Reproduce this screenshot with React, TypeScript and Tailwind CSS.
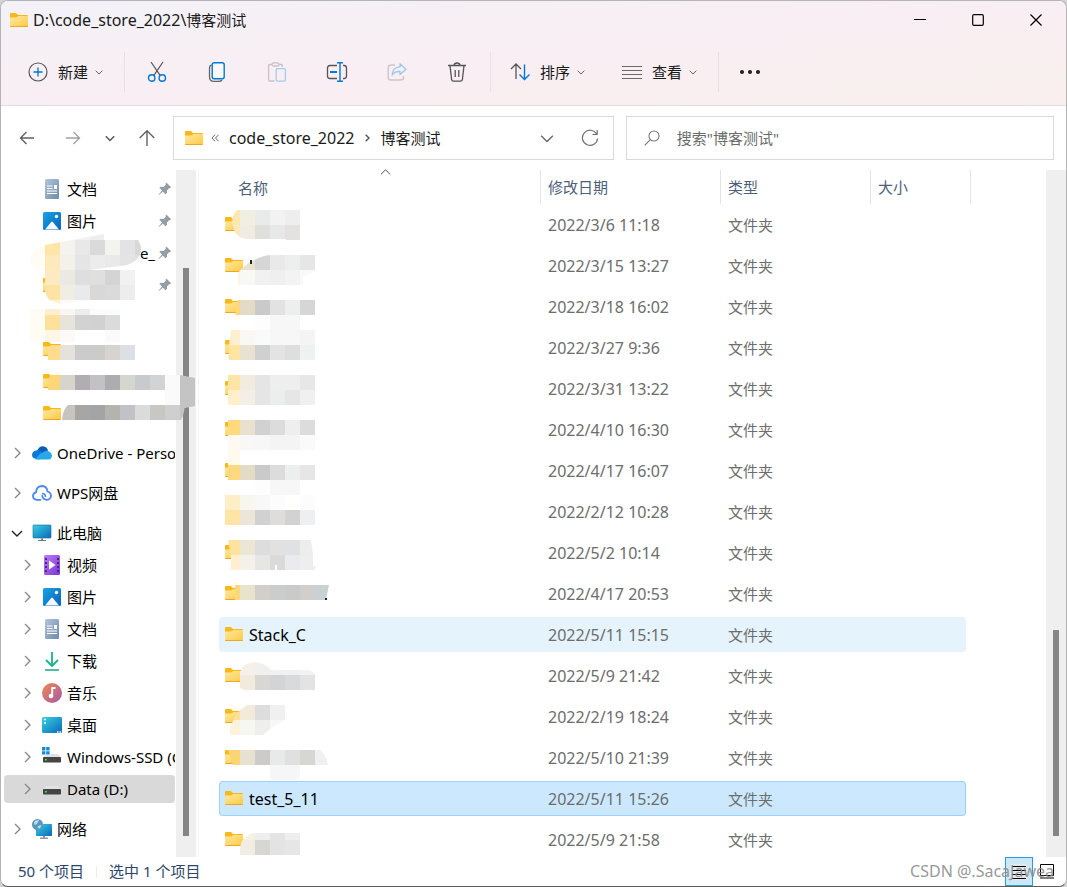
import { useId, type ReactNode } from "react";

/* ---------- icons ---------- */

function FolderIcon() {
  const id = useId();
  return (
    <svg width="18" height="14" viewBox="0 0 18 14" className="shrink-0" aria-hidden="true">
      <defs>
        <linearGradient id={id} x1="0" y1="0" x2="1" y2="1">
          <stop offset="0" stopColor="#ffe9a6" />
          <stop offset="1" stopColor="#fec93d" />
        </linearGradient>
      </defs>
      <path d="M0 1Q0 0 1 0H6L8 2H17Q18 2 18 3V6H0Z" fill="#f9b817" />
      <path d="M0 4.5H6L8.5 3H18V13Q18 14 17 14H1Q0 14 0 13Z" fill={`url(#${id})`} />
      <path d="M0 13H18Q18 14 17 14H1Q0 14 0 13Z" fill="#eda81f" />
    </svg>
  );
}

function Chevron({ dir, size = 8, color = "#666", width = 1 }: { dir: "up" | "down" | "right"; size?: number; color?: string; width?: number }) {
  const d = dir === "down" ? "M1 4L6 9L11 4" : dir === "up" ? "M1 8L6 3L11 8" : "M4 1L9 6L4 11";
  return (
    <svg width={size} height={size} viewBox="0 0 12 12" className="shrink-0" fill="none" stroke={color} strokeWidth={(width * 12) / size} aria-hidden="true">
      <path d={d} />
    </svg>
  );
}

function Svg({ w = 20, h = 20, children }: { w?: number; h?: number; children: ReactNode }) {
  return (
    <svg width={w} height={h} viewBox={`0 0 ${w} ${h}`} className="shrink-0" fill="none" aria-hidden="true">
      {children}
    </svg>
  );
}

const NewIcon = () => (
  <Svg>
    <circle cx="10" cy="10" r="9" stroke="#555" strokeWidth="1.2" />
    <path d="M10 5.5V14.5M5.5 10H14.5" stroke="#0078d4" strokeWidth="1.3" />
  </Svg>
);
const CutIcon = () => (
  <Svg h={22}>
    <path d="M4 1L13.3 14.6M16 1L6.7 14.6" stroke="#555" strokeWidth="1.2" />
    <circle cx="4.7" cy="17" r="3.2" stroke="#0078d4" strokeWidth="1.4" />
    <circle cx="15.3" cy="17" r="3.2" stroke="#0078d4" strokeWidth="1.4" />
  </Svg>
);
const CopyIcon = () => (
  <Svg>
    <path d="M4.5 3Q2.5 3.5 2.5 6V15Q2.5 19.3 7 19.3H12Q14 19.3 15 18" stroke="#666" strokeWidth="1.3" />
    <rect x="5.2" y="0.7" width="12" height="16" rx="2" fill="#f9f9fd" stroke="#0078d4" strokeWidth="1.4" />
  </Svg>
);
const PasteIcon = () => (
  <Svg>
    <path d="M7.5 19H2.8Q1.6 19 1.6 17.8V3.7Q1.6 2.5 2.8 2.5H5M12 2.5H14.2Q15.4 2.5 15.4 3.7V5" stroke="#c7c3c8" strokeWidth="1.3" />
    <rect x="5" y="0.8" width="7" height="3.2" rx="1.6" stroke="#c7c3c8" strokeWidth="1.3" />
    <rect x="9.2" y="6.6" width="9.2" height="12.6" rx="1.5" stroke="#a5cbee" strokeWidth="1.3" />
  </Svg>
);
const RenameIcon = () => (
  <Svg w={22}>
    <path d="M11 3.5H4Q1.5 3.5 1.5 6V14Q1.5 16.5 4 16.5H11M17 3.5H18Q20.5 3.5 20.5 6V14Q20.5 16.5 18 16.5H17" stroke="#555" strokeWidth="1.3" />
    <path d="M4 10H11" stroke="#0078d4" strokeWidth="1.8" />
    <path d="M14 0.7V19.3M11 0.7H17M11 19.3H17" stroke="#0078d4" strokeWidth="1.4" />
  </Svg>
);
const ShareIcon = () => (
  <Svg>
    <path d="M8 3H4Q1.2 3 1.2 5.8V15.2Q1.2 18 4 18H13.5Q16.5 18 16.5 15.2V14" stroke="#cbc6c9" strokeWidth="1.4" />
    <path d="M13 1.8L19 7.2L13 12.5V9.5Q7.5 9.2 5 13.2Q5.5 5.3 13 4.9Z" stroke="#9cc8ee" strokeWidth="1.3" strokeLinejoin="round" />
  </Svg>
);
const DeleteIcon = () => (
  <Svg>
    <path d="M1 3.5H19M7 3.3Q7.3 1 10 1T13 3.3M3 3.7L4.6 17.4Q4.8 19.2 6.5 19.2H13.5Q15.2 19.2 15.4 17.4L17 3.7M8.2 8V15M11.8 8V15" stroke="#555" strokeWidth="1.3" />
  </Svg>
);
const SortIcon = () => (
  <Svg>
    <path d="M6 17V2M1 7L6 2L11 7" stroke="#555" strokeWidth="1.3" />
    <path d="M14.5 2.5V17.5M9.5 12.5L14.5 17.5L19.5 12.5" stroke="#0078d4" strokeWidth="1.4" />
  </Svg>
);
const ListIcon = () => (
  <Svg>
    <path d="M0 4.5H20M0 8.5H20M0 12.5H20M0 16.5H20" stroke="#6b686a" strokeWidth="1" />
  </Svg>
);
const PinIcon = () => (
  <Svg w={14} h={14}>
    <path d="M8.5 0.7L13.2 5.3L12 6.2L11.2 6L9 8.4L9 11L7.6 12.2L4.8 9.5L1 13L0.5 12.7L4 8.6L1.3 5.8L2.7 4.7L5.4 4.9L7.8 2.7L7.5 1.8Z" fill="#929da5" />
  </Svg>
);

function DocIcon() {
  return (
    <Svg w={20}>
      <defs>
        <linearGradient id="doc-face" x1="0" y1="0" x2="1" y2="1">
          <stop stopColor="#b3c5d8" />
          <stop offset="1" stopColor="#6d8bab" />
        </linearGradient>
      </defs>
      <rect x="3" width="14" height="20" rx="1.5" fill="url(#doc-face)" />
      <path d="M5 7H10.5M5 9.5H10.5M5 12H15M5 14.5H15" stroke="#fff" strokeWidth="1.2" />
      <rect x="12" y="6" width="3" height="4" fill="#fff" />
    </Svg>
  );
}
function PictureIcon() {
  return (
    <Svg>
      <defs>
        <linearGradient id="pic-face" x1="0" y1="0" x2="1" y2="1">
          <stop stopColor="#17a3e6" />
          <stop offset="1" stopColor="#0a62bb" />
        </linearGradient>
      </defs>
      <rect x="1" y="1" width="18" height="18" rx="1.5" fill="url(#pic-face)" />
      <path d="M3 18.5L9.2 11Q10 10.2 10.8 11L17 18.5Z" fill="#f3f8fd" />
      <circle cx="14.5" cy="5.5" r="1.7" fill="#fff" />
    </Svg>
  );
}
function CloudIcon() {
  return (
    <Svg w={20}>
      <path d="M5 8Q7 3 11 3.2Q15 3.6 16 7.5L11 11Z" fill="#0a5cb8" />
      <path d="M4.5 16Q0 15.5 0 11.8Q0.3 8.3 4 7.5Q7.5 6.5 10 8.8L14.5 12L7 16.5Z" fill="#0d79d6" />
      <path d="M3.5 16.5Q6 11.5 10.5 9.8Q14 6.5 17 8.5Q19.8 9.5 20 12.6Q19.8 16.5 16.2 16.6H5Z" fill="#28a8ea" />
    </Svg>
  );
}
function WpsIcon() {
  return (
    <Svg w={20}>
      <path d="M8.5 16.8H4.5Q1 16.2 1 13Q1 10 4 9.3Q4.6 3 10.2 3Q15 3.2 15.5 8.5Q19 9.5 19 13Q18.6 16.6 15 16.8Q10.5 16.5 10.3 12.8" stroke="#4a87f2" strokeWidth="1.8" strokeLinecap="round" />
      <path d="M10 10.5Q13.5 10.4 13.5 14" stroke="#4a87f2" strokeWidth="1.6" />
    </Svg>
  );
}
const TealFace = ({ id }: { id: string }) => (
  <defs>
    <linearGradient id={id} x1="0" y1="0" x2="1" y2="1">
      <stop stopColor="#36d3e2" />
      <stop offset="1" stopColor="#0b67b9" />
    </linearGradient>
  </defs>
);
function PcIcon() {
  return (
    <Svg w={20}>
      <TealFace id="pc-face" />
      <rect x="1" y="2" width="18" height="13" rx="0.7" fill="url(#pc-face)" stroke="#126b94" strokeWidth="0.6" />
      <path d="M9 15.5H11V17H14V18H6V17H9Z" fill="#687887" />
    </Svg>
  );
}
function VideoIcon() {
  return (
    <Svg>
      <defs>
        <linearGradient id="vid-face" x1="0" y1="0" x2="1" y2="1">
          <stop stopColor="#b97cf4" />
          <stop offset="1" stopColor="#7c35d6" />
        </linearGradient>
      </defs>
      <rect x="2" width="16" height="20" rx="1.5" fill="url(#vid-face)" />
      <path d="M4 3V18M16 3V18" stroke="#43216f" strokeWidth="1.8" strokeDasharray="2 2" />
      <path d="M7 5.5V14.5L13.5 10Z" fill="#fff" />
    </Svg>
  );
}
function DownloadIcon() {
  return (
    <Svg>
      <path d="M10 1V14.5M4 9L10 15L16 9" stroke="#17b38c" strokeWidth="1.8" />
      <path d="M3 19H17" stroke="#17a78a" strokeWidth="1.7" />
    </Svg>
  );
}
function MusicIcon() {
  return (
    <Svg>
      <defs>
        <linearGradient id="music-face" x1="0" y1="0" x2="1" y2="1">
          <stop stopColor="#f08a4d" />
          <stop offset="1" stopColor="#a557a8" />
        </linearGradient>
      </defs>
      <circle cx="10" cy="10" r="10" fill="url(#music-face)" />
      <circle cx="9" cy="13" r="2.3" fill="#fff" />
      <path d="M10.2 13V5H13.5" stroke="#fff" strokeWidth="1.9" />
    </Svg>
  );
}
function DesktopIcon() {
  return (
    <Svg>
      <TealFace id="desk-face" />
      <rect y="2" width="20" height="16" rx="1.2" fill="url(#desk-face)" />
      <path d="M2 4.5H4M2 8H4M15 17H16.5M17.5 17H19" stroke="#fff" strokeWidth="1.7" />
    </Svg>
  );
}
function DriveIcon({ system = false }: { system?: boolean }) {
  return (
    <Svg>
      <path d="M4 7H16L19 10.5H1Z" fill="#e0e2e5" />
      <rect x="1" y="10" width="18" height="5.5" rx="0.8" fill="#454545" />
      <rect x="3" y="12" width="2" height="1.5" fill="#45d74b" />
      {system && (
        <>
          <rect width="8" height="8" fill="#fff" />
          <path d="M0 0H3.4V3.4H0ZM4.2 0H7.6V3.4H4.2ZM0 4.2H3.4V7.6H0ZM4.2 4.2H7.6V7.6H4.2Z" fill="#148bd8" />
        </>
      )}
    </Svg>
  );
}
function NetworkIcon() {
  return (
    <Svg w={20}>
      <TealFace id="net-face" />
      <rect x="4" y="5" width="16" height="12" rx="0.8" fill="url(#net-face)" />
      <path d="M11 17H13V18.5H16V20H8V18.5H11Z" fill="#8b9aa7" />
      <circle cx="5.5" cy="5.5" r="5.5" fill="#5b97ba" />
      <path d="M2 3Q4 0.5 7 1L5 5L2.5 6ZM6 7L9.5 6L8 9.5L5.5 9Z" fill="#b9dcec" />
    </Svg>
  );
}

/* ---------- mosaic over hidden names: strips of 15px tiles ---------- */

type Strip = [x: number, y: number, colors: string];
type Cover = { strips: Strip[]; clip?: string; mark?: [number, number, number, number] };

function Mosaic({ cover }: { cover: Cover }) {
  const id = useId();
  return (
    <svg width="1" height="1" className="pointer-events-none absolute left-0 top-0 z-10 overflow-visible" aria-hidden="true">
      {cover.clip && (
        <clipPath id={id}>
          <path d={cover.clip} />
        </clipPath>
      )}
      <g clipPath={cover.clip ? `url(#${id})` : undefined} shapeRendering="crispEdges">
        {cover.strips.map(([x, y, colors]) =>
          colors.split(" ").map((c, i) => (c === "-" ? null : <rect key={`${x}-${y}-${i}`} x={x + i * 15} y={y} width="15" height="15" fill={`#${c}`} />)),
        )}
      </g>
      {cover.mark && <rect x={cover.mark[0]} y={cover.mark[1]} width={cover.mark[2]} height={cover.mark[3]} fill="#14283c" />}
    </svg>
  );
}

/* ---------- data ---------- */

type FileRow = { name?: string; date: string; state?: "hover" | "selected"; cover?: Cover };

const files: FileRow[] = [
  { date: "2022/3/6 11:18", cover: { clip: "M18 3L14 9L13 16L16 26L22 31L28 32H67V33H81V3Z", strips: [[6, 3, "fde6b0 f1eee2 e8ebe9 f2f2f2 eeeeee"], [6, 18, "fbe9bf f0ece1 dfdfdc e6e9e8 e4e1e1"]] } },
  { date: "2022/3/15 13:27", cover: { clip: "M19 36V25Q25 17 35 12Q45 7 53 7H96V23L84 29V37H19Z", mark: [31, 12, 2, 4], strips: [[6, 7, "fde6b0 e8e2cf d6d6d6 e9e9e9 ecefee e6e6e6"], [6, 22, "fdf5e3 f8f8f4 f1f1f1 efefef f3f3f3 f9f9f9"]] } },
  { date: "2022/3/18 16:02", cover: { clip: "M19 11H96V41H36V26H16Z", strips: [[6, 11, "fdd77d e4dbc6 c9cac9 e2e2e2 ecefed d6d6d6"], [36, 26, "fdfdfd f7f7f7 f7f7f7"]] } },
  { date: "2022/3/27 9:36", cover: { clip: "M12 0H96V30H10V15Z", strips: [[6, 0, "fdefd0 f9f8f2 fafafa f7f7f7 f7f7f7 f4f4f4"], [6, 15, "fee5a2 e9e2d2 cfd1d0 e3e3e3 dedede eef2f1"]] } },
  { date: "2022/3/31 13:22", cover: { clip: "M9 4H96V34H9Z", strips: [[6, 4, "fee5a5 f1ecdf e5e5e5 eeeeee eeeeee e7e7e7"], [6, 19, "ffefcb f3efe6 e5e5e5 eaeeec e6e6e6 eef1ef"]] } },
  { date: "2022/4/10 16:30", cover: { clip: "M9 8H96V53H9Z", strips: [[6, 8, "fed97e e9e1cd d1d1d1 dcdcdc eeeeee dcdcdc"], [6, 23, "fff9f2 faf8f7 f7f7f7 f4f4f4 f4f4f4 fafafa"], [6, 38, "fff9ee"]] } },
  { date: "2022/4/17 16:07", cover: { clip: "M9 12H96V42H9Z", strips: [[6, 12, "fed97e e4dbc6 c9cac9 dcdcdc ebefed e6e6e6"], [36, 27, "fdfdfd f7f7f7 f7f7f7"]] } },
  { date: "2022/2/12 10:28", cover: { strips: [[6, 1, "feeec8 f7f6ef f8f8f8 fcfcfc fffffc fcfcfc"], [6, 16, "fee5a5 ece5d8 d1d1d1 dedddc d2d2d2 eeeff1"]] } },
  { date: "2022/5/2 10:14", cover: { clip: "M9 5H92L94 19V31H96V35H58V30H56V35H12V22Z", strips: [[6, 5, "fee3a0 ece6d6 dddddd e2e1df dfe1e3 eceeed"], [6, 20, "ffefd0 f5f0e8 e6e6e4 dbdad9 e9ebee eeeeee"]] } },
  { date: "2022/4/17 20:53", cover: { clip: "M16 9H110L107 24H16Z", mark: [106, 22, 2, 2], strips: [[6, 9, "fdd77d e9e3cc d2ceca cbcdcc c9cbcb d1cfcb cbd1d3"]] } },
  { name: "Stack_C", date: "2022/5/11 15:15", state: "hover" },
  { date: "2022/5/9 21:42", cover: { clip: "M21 30V14Q25 4 36 4Q46 5 52 12H89Q95 13 96 17V32H25Z", strips: [[21, 2, "f5f1ea f0f0ef f1f1f1 f0f0f2 f2f2f2"], [21, 17, "f2eadd d9d7d3 d3d4d6 d9dadc e3e3e3"]] } },
  { date: "2022/2/19 18:24", cover: { clip: "M11 36V29L16 17L21 11L28 6H66V21L51 30L44 36Z", strips: [[6, 6, "fde09a f2ebda dddddd f0f0f0"], [6, 21, "fff2dc f6f7f1 eeefed f6f8f8"]] } },
  { date: "2022/5/10 21:39", cover: { clip: "M9 10H101Q107 14 109 25H81V38L76 40H53L51 38V25H14Z", strips: [[6, 10, "fcd573 e9e1cf cdcaca e7eae8 e0e0e0 d6d7d2 f0f0f2"], [51, 25, "f6f6f6 f6f6f6"]] } },
  { name: "test_5_11", date: "2022/5/11 15:26", state: "selected" },
  { date: "2022/5/9 21:58", cover: { clip: "M21 33V26Q22 15 34 11H81V33Z", strips: [[21, 3, "f5f1e6 eeeeee e4e4e4 eeeeee"], [21, 18, "f2ede3 d8d6d3 e3e3e3 e6e6e6"]] } },
];

type Pinned = { label?: string; icon?: ReactNode; tail?: string; pinned?: boolean; cover?: Cover };

const pinned: Pinned[] = [
  { label: "文档", icon: <DocIcon />, pinned: true },
  { label: "图片", icon: <PictureIcon />, pinned: true },
  {
    tail: "e_",
    pinned: true,
    cover: {
      clip: "M29 20Q33 10 44 8L103 -3V3H137Q143 12 137 21Q131 28 119 29L88 33H44Q29 34 29 20Z",
      strips: [[29, -12, "fffcf3 fdf3d8 fafafa f2f2f2 eeeeee"], [29, 3, "fffcf3 fde6a8 f5f3ee e8e8e8 dadada f3f4ee e3e3e5 d8d8d8"], [29, 18, "fffcf3 fdeabc f4f1ea e5e5e5 ececec e9e9ea e4e4e5 e0e0e0"]],
    },
  },
  {
    pinned: true,
    cover: {
      clip: "M44 1H134V31H90L60 35Q44 33 44 20Z",
      strips: [[44, 1, "fcebc0 ece8e4 dedede dfe0dd d4d4d4 eff2f1"], [44, 16, "fee3a5 f0ede3 e8eaeb d8d8d8 dadadb ededed"], [44, 31, "fdf3d8 fafafa fafafa"]],
    },
  },
  {
    cover: {
      clip: "M29 8H119V41H29Z",
      strips: [[29, -1, "fffcf3 fdefcf faf7f2 ededed fafcfb fafcfb"], [29, 14, "fffcf3 fee29c e7e4dc d1d3d2 d1d1d1 dbdbd9"], [29, 29, "fffcf3 fff7e6 fcfaf6 ffffff ffffff fbf9f9"]],
    },
  },
  { cover: { clip: "M51 12H134V27H47V17Z", strips: [[44, 12, "fedc8c e5e2db cbcbcb cbcbc9 d7d3cf dcdfe5"]] } },
  {
    cover: {
      clip: "M50 10H179L194 13V41L184 43H179V46H164V25H47V14Z",
      strips: [[44, 10, "fed67a d7d4cb b0aeb0 c3c1c3 abadae d6d6d1 c7cbce d1d3d4 fafafa c4c4c4"], [164, 25, "fafafa c4c4c4"], [164, 40, "fafafa c4c4c4"]],
    },
  },
  { cover: { clip: "M67 8H184Q183 18 180 23H61Q62 12 67 8Z", strips: [[59, 8, "c7c3bf a7a6a5 a5a4a5 b4b3b0 c0c2c7 dbdbdb c8c7c4 cfcfcf c4c4c4"]] } },
];

const computer: { label: string; icon: ReactNode; active?: boolean }[] = [
  { label: "视频", icon: <VideoIcon /> },
  { label: "图片", icon: <PictureIcon /> },
  { label: "文档", icon: <DocIcon /> },
  { label: "下载", icon: <DownloadIcon /> },
  { label: "音乐", icon: <MusicIcon /> },
  { label: "桌面", icon: <DesktopIcon /> },
  { label: "Windows-SSD (C:)", icon: <DriveIcon system /> },
  { label: "Data (D:)", icon: <DriveIcon />, active: true },
];

/* ---------- pieces ---------- */

function TitleBar() {
  return (
    <div className="flex h-[37px] items-center pl-[9px] pr-px">
      <FolderIcon />
      <h1 className="ml-[5px] flex-1 text-base leading-5 text-[#1a1a1a]">
        D:\code_store_2022\<span className="text-[15px]">博客测试</span>
      </h1>
      {[
        ["最小化", "M0 5.5H12"],
        ["最大化", "M2 0.7H10Q11.3 0.7 11.3 2V10Q11.3 11.3 10 11.3H2Q0.7 11.3 0.7 10V2Q0.7 0.7 2 0.7Z"],
        ["关闭", "M0.5 0.5L11.5 11.5M11.5 0.5L0.5 11.5"],
      ].map(([label, d]) => (
        <button key={label} type="button" aria-label={label} className="flex h-9 w-[58px] items-center justify-center">
          <svg width="12" height="12" viewBox="0 0 12 12" fill="none" stroke="#000" strokeWidth="1.2">
            <path d={d} />
          </svg>
        </button>
      ))}
    </div>
  );
}

const Divider = () => <span className="h-10 w-px bg-[#e8e0e6]" />;

function Toolbar() {
  const tools: [string, ReactNode][] = [
    ["剪切", <CutIcon />],
    ["复制", <CopyIcon />],
    ["粘贴", <PasteIcon />],
    ["重命名", <RenameIcon />],
    ["共享", <ShareIcon />],
    ["删除", <DeleteIcon />],
  ];
  return (
    <div role="toolbar" className="flex items-center pb-[13px] pt-[14px] text-[15px] leading-5 text-[#1a1a1a]">
      <button type="button" className="flex h-10 items-center pl-[27px] pr-[21px]">
        <NewIcon />
        <span className="ml-[10px] mr-[7px]">新建</span>
        <Chevron dir="down" />
      </button>
      <Divider />
      <div className="ml-[2px] mr-[3px] flex">
        {tools.map(([label, icon]) => (
          <button key={label} type="button" aria-label={label} className="flex h-10 w-[60px] items-center justify-center">
            {icon}
          </button>
        ))}
      </div>
      <Divider />
      <button type="button" className="flex h-10 items-center px-[19px]">
        <SortIcon />
        <span className="ml-[10px] mr-[7px]">排序</span>
        <Chevron dir="down" />
      </button>
      <button type="button" className="flex h-10 items-center pl-[18px] pr-[21px]">
        <ListIcon />
        <span className="ml-[10px] mr-[7px]">查看</span>
        <Chevron dir="down" />
      </button>
      <Divider />
      <button type="button" aria-label="更多" className="flex h-10 w-[62px] items-center justify-center">
        <Svg h={4}>
          <circle cx="2" cy="2" r="2" fill="#1a1a1a" />
          <circle cx="10" cy="2" r="2" fill="#1a1a1a" />
          <circle cx="18" cy="2" r="2" fill="#1a1a1a" />
        </Svg>
      </button>
    </div>
  );
}

function NavArrow({ label, d, color }: { label: string; d: string; color: string }) {
  return (
    <button type="button" aria-label={label} className="flex h-8 w-8 items-center justify-center">
      <svg width="16" height="16" viewBox="0 0 16 16" fill="none" stroke={color} strokeWidth="1.4">
        <path d={d} />
      </svg>
    </button>
  );
}

function AddressRow() {
  return (
    <div className="flex h-16 items-center pl-[10px] pr-3">
      <div className="flex w-[162px] items-center">
        <NavArrow label="后退" color="#606060" d="M15 8H1.5M7.5 2L1.5 8L7.5 14" />
        <span className="w-[14px]" />
        <NavArrow label="前进" color="#a2a2a2" d="M1 8H14.5M8.5 2L14.5 8L8.5 14" />
        <button type="button" aria-label="最近浏览的位置" className="ml-[13px] mr-[13px] flex h-8 w-4 items-center justify-center">
          <Chevron dir="down" size={10} color="#555" width={1.4} />
        </button>
        <NavArrow label="上移" color="#606060" d="M8 16V1M0.7 8L8 0.8L15.3 8" />
      </div>
      <div className="flex h-11 flex-[51] items-center border border-[#d9d9d9] pl-[11px] pr-[2px] text-[15px] leading-5 text-[#1a1a1a]">
        <FolderIcon />
        <span className="ml-2">
          <Svg w={8} h={8}>
            <path d="M4 0.8L1 4L4 7.2M7.5 0.8L4.5 4L7.5 7.2" stroke="#666" />
          </Svg>
        </span>
        <a href="#code_store_2022" className="ml-[10px] text-base leading-5">
          code_store_2022
        </a>
        <span className="mx-[9px]">
          <Chevron dir="right" size={8} color="#555" width={1.4} />
        </span>
        <a href="#current" className="flex-1 whitespace-nowrap">
          博客测试
        </a>
        <button type="button" aria-label="历史记录" className="flex h-8 w-[44px] items-center justify-center">
          <Chevron dir="down" size={14} color="#666" width={1.3} />
        </button>
        <button type="button" aria-label="刷新" className="flex h-8 w-[42px] items-center justify-center">
          <Svg w={18} h={18}>
            <path d="M15.6 5A7.6 7.6 0 1 0 16.6 9.5M16.2 1V5.5H11.5" stroke="#707070" strokeWidth="1.2" />
          </Svg>
        </button>
      </div>
      <label className="ml-3 flex h-11 flex-[49] items-center border border-[#d9d9d9] pl-[17px]">
        <Svg w={16} h={16}>
          <circle cx="10" cy="6" r="5" stroke="#777" strokeWidth="1.1" />
          <path d="M6.4 9.6L0.7 15.3" stroke="#777" strokeWidth="1.1" />
        </Svg>
        <input type="text" aria-label="搜索" placeholder={'搜索"博客测试"'} className="ml-[17px] min-w-0 flex-1 text-[15px] leading-5 outline-none placeholder:text-[#6b6b6b]" />
      </label>
    </div>
  );
}

function TreeRow({ label, icon, open = false, nested = false, active = false }: { label: string; icon: ReactNode; open?: boolean; nested?: boolean; active?: boolean }) {
  return (
    <div className="flex h-8 items-center pl-[3px]">
      <button
        type="button"
        aria-expanded={open}
        className={`flex h-7 w-[171px] items-center overflow-hidden rounded-sm ${nested ? "pl-[17px]" : "pl-[7px]"} ${active ? "bg-[#d9d9d9]" : ""}`}
      >
        <span className="mr-[9px]">
          <Chevron dir={open ? "down" : "right"} size={12} color={open ? "#222" : "#888"} width={1.4} />
        </span>
        {icon}
        <span className="ml-[5px] whitespace-nowrap text-[15px] leading-5 text-black">{label}</span>
      </button>
    </div>
  );
}

function Sidebar() {
  return (
    <nav className="w-[175px] shrink-0 pt-[3px]">
      {pinned.map((p, i) => (
        <div key={i} className="relative flex h-8 items-center pl-[41px] pr-1">
          {p.label ? (
            <>
              {p.icon}
              <span className="ml-[5px] flex-1 text-[15px] leading-5 text-black">{p.label}</span>
            </>
          ) : (
            <span className="flex-1 pl-px">
              <FolderIcon />
            </span>
          )}
          {p.tail && <span className="mr-[3px] text-[15px] leading-5 text-black">{p.tail}</span>}
          {p.pinned && <PinIcon />}
          {p.cover && <Mosaic cover={p.cover} />}
        </div>
      ))}
      <div className="mt-2">
        <TreeRow label="OneDrive - Personal" icon={<CloudIcon />} />
      </div>
      <div className="mt-2">
        <TreeRow label="WPS网盘" icon={<WpsIcon />} />
      </div>
      <div className="mt-2">
        <TreeRow label="此电脑" icon={<PcIcon />} open />
        {computer.map((c) => (
          <TreeRow key={c.label} {...c} nested />
        ))}
      </div>
      <div className="mt-2">
        <TreeRow label="网络" icon={<NetworkIcon />} />
      </div>
    </nav>
  );
}

const rowStyle = {
  none: "border-transparent",
  hover: "border-[#e5f3fd] bg-[#e5f3fd]",
  selected: "border-[#99d1ff] bg-[#cce8ff]",
};

function FileTable() {
  return (
    <table className="ml-5 w-[752px] table-fixed border-collapse text-left text-[15px] leading-5">
      <thead>
        <tr className="h-[37px] align-top text-[#4c607a]">
          <th className="w-[321px] p-0 font-normal">
            <div className="flex h-[34px] flex-col pl-[11px]">
              <span className="flex h-2 items-end justify-center">
                <Chevron dir="up" size={11} color="#555" width={1} />
              </span>
              <span className="pl-2">名称</span>
            </div>
          </th>
          <th className="w-[180px] p-0 font-normal">
            <div className="h-[34px] border-l border-[#e3e3e3] pl-[7px] pt-[7px]">修改日期</div>
          </th>
          <th className="w-[150px] p-0 font-normal">
            <div className="h-[34px] border-l border-[#e3e3e3] pl-[7px] pt-[7px]">类型</div>
          </th>
          <th className="w-[101px] p-0 font-normal">
            <div className="h-[34px] border-x border-[#e3e3e3] pl-[7px] pt-[7px]">大小</div>
          </th>
        </tr>
      </thead>
      <tbody>
        {files.map((f, i) => {
          const s = rowStyle[f.state ?? "none"];
          return (
            <tr key={i} className="h-[41px] align-top text-[#6d6d6d] last:h-[35px]">
              <td className="relative p-0">
                <div className={`flex h-[35px] items-center rounded-l-sm border-y border-l pb-px pl-[5px] ${s}`}>
                  <FolderIcon />
                  {f.name && <span className="ml-[6px] pt-px text-base leading-5 text-black">{f.name}</span>}
                </div>
                {f.cover && <Mosaic cover={f.cover} />}
              </td>
              <td className="p-0">
                <div className={`flex h-[35px] items-center border-y pl-2 text-base leading-5 ${s}`}>{f.date}</div>
              </td>
              <td className="p-0">
                <div className={`flex h-[35px] items-center border-y pl-2 ${s}`}>文件夹</div>
              </td>
              <td className="p-0">
                <div className={`mr-[5px] h-[35px] rounded-r-sm border-y border-r ${s}`} />
              </td>
            </tr>
          );
        })}
      </tbody>
    </table>
  );
}

function StatusBar() {
  return (
    <footer className="relative flex h-[29px] items-center pl-[17px] text-[15px] leading-5 text-[#2b4668]">
      <span className="pb-[2px]">50 个项目</span>
      <span className="mx-3 h-3 w-px bg-[#ededed]" />
      <span className="flex-1 pb-[2px]">选中 1 个项目</span>
      <button type="button" aria-label="详细信息" className="flex h-[29px] w-7 items-center justify-center border border-[#2a9fd6] bg-[#cce8f6]">
        <Svg w={16} h={16}>
          <rect width="16" height="16" fill="#e2eaf1" />
          <path d="M1 2.5H15M1 6.5H15M1 10.5H15M1 14.5H15" stroke="#000" />
        </Svg>
      </button>
      <button type="button" aria-label="大缩略图" className="flex h-[29px] w-7 items-center justify-center">
        <Svg w={16} h={16}>
          <path d="M1.5 0.5H14.5V11.5H1.5ZM1 14H15" stroke="#000" />
        </Svg>
      </button>
      <span className="w-[5px]" />
      <span className="pointer-events-none absolute right-3 top-1 text-base leading-5 text-[#8a8a8a]/90">CSDN @.SacaJawea</span>
    </footer>
  );
}

export default function App() {
  return (
    <div className="min-h-screen bg-[#d3d3d5] font-['Noto_Sans','Noto_Sans_CJK_SC',sans-serif]">
      <div className="flex min-h-screen flex-col overflow-hidden rounded-lg border border-[#b4b3b6] border-b-[#5c5c5c] bg-white">
        <header className="border-b border-[#e4dce0] bg-[linear-gradient(174deg,#f3f2f8_0%,#f9eef3_50%,#f9f0ee_100%)]">
          <TitleBar />
          <Toolbar />
        </header>
        <AddressRow />
        <main className="flex flex-1">
          <Sidebar />
          <div className="flex w-5 shrink-0 justify-center bg-[#efefef] pb-[21px] pt-[98px]">
            <div className="w-[6px] bg-[#858585]" />
          </div>
          <div className="ml-[2px] w-px bg-[#f5f5f5]" />
          <section className="min-w-0 flex-1">
            <FileTable />
          </section>
          <div className="flex w-5 shrink-0 items-end justify-center bg-[#efefef] pb-[21px]">
            <div className="h-[206px] w-[6px] bg-[#858585]" />
          </div>
        </main>
        <StatusBar />
      </div>
    </div>
  );
}
